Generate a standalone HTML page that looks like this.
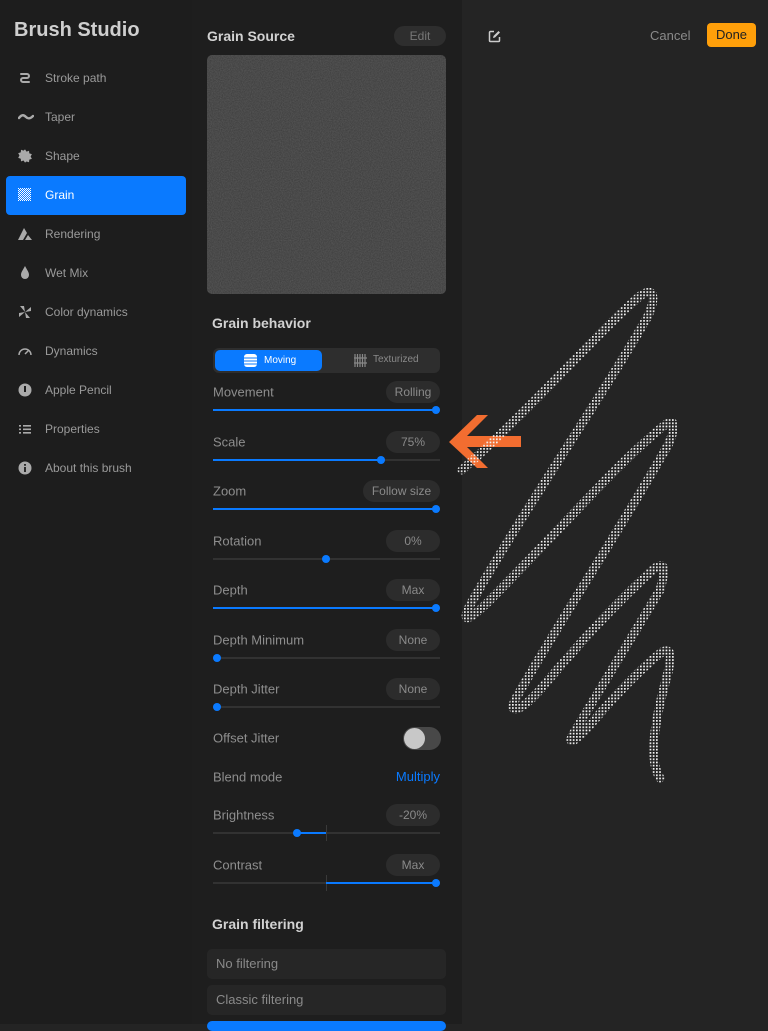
<!DOCTYPE html>
<html><head><meta charset="utf-8"><style>
*{margin:0;padding:0;box-sizing:border-box}
body{width:768px;height:1024px;overflow:hidden;background:#242424;font-family:"Liberation Sans",sans-serif;position:relative}
.a{position:absolute}
#side{left:0;top:0;width:192px;height:1024px;background:#1d1d1d}
#mid{left:192px;top:0;width:270px;height:1024px;background:#1e1e1e}
.nav{position:absolute;left:6px;width:180px;height:39px;color:#9a9a9a;font-size:12px;line-height:39px;padding-left:39px;border-radius:4px}
.nav svg{position:absolute;left:12px;top:12px}
.lbl{position:absolute;left:213px;color:#8e8e8e;font-size:13px;transform:translateY(-50%)}
.pill{position:absolute;right:328px;height:22px;line-height:22px;border-radius:11px;background:#2c2c2c;color:#8a8a8a;font-size:12px;text-align:center;transform:translateY(-50%)}
.trk{position:absolute;left:213px;width:227px;height:2px;background:#323232}
.fill{position:absolute;height:2px;background:#0a7aff}
.dot{position:absolute;width:8px;height:8px;border-radius:4px;background:#0a7aff}
.h{position:absolute;color:#d2d2d2;font-weight:bold;font-size:14px}
</style></head><body>
<div id="side" class="a"></div>
<div id="mid" class="a"></div>
<div class="a" style="left:14px;top:19px;color:#cfcfcf;font-size:20px;font-weight:bold">Brush Studio</div>

<div class="nav" style="top:59px"><svg width="14" height="14" viewBox="0 0 14 14"><path d="M3 3h6a2 2 0 0 1 0 4H5a2 2 0 0 0 0 4h6" stroke="#aaa" stroke-width="2" fill="none" stroke-linecap="round"/></svg>Stroke path</div>
<div class="nav" style="top:98px"><svg width="16" height="14" viewBox="0 0 16 14"><path d="M1 8c3-4 5-3 7-1s4 2 7-1" stroke="#aaa" stroke-width="2.4" fill="none" stroke-linecap="round"/></svg>Taper</div>
<div class="nav" style="top:137px"><svg width="14" height="14" viewBox="0 0 14 14"><path d="M7 0l1.6 2.3 2.6-.9.3 2.8 2.7.8-1.3 2.5 1.3 2.5-2.7.8-.3 2.8-2.6-.9L7 14l-1.6-2.3-2.6.9-.3-2.8L-.2 9l1.3-2.5L-.2 4l2.7-.8.3-2.8 2.6.9z" fill="#aaa" transform="scale(.95) translate(.4 .4)"/></svg>Shape</div>
<div class="nav" style="top:176px;background:#0a7aff;color:#fff"><svg width="13" height="13" viewBox="0 0 13 13"><defs><pattern id="ck" width="2" height="2" patternUnits="userSpaceOnUse"><rect width="1" height="1" fill="#fff"/><rect x="1" y="1" width="1" height="1" fill="#fff"/></pattern></defs><rect width="13" height="13" fill="url(#ck)"/></svg>Grain</div>
<div class="nav" style="top:215px"><svg width="15" height="14" viewBox="0 0 15 14"><path d="M0 13L6 1l3 5-4 7zM7 13l3-5 4 5z" fill="#aaa"/></svg>Rendering</div>
<div class="nav" style="top:254px"><svg width="14" height="14" viewBox="0 0 14 14"><path d="M7 0C5 4 3 6 3 9a4 4 0 0 0 8 0c0-3-2-5-4-9z" fill="#aaa"/></svg>Wet Mix</div>
<div class="nav" style="top:293px"><svg width="14" height="14" viewBox="0 0 14 14"><path d="M7 7L2 1h4zM7 7l6-5v4zM7 7l5 6H8zM7 7l-6 5V8z" fill="#aaa"/></svg>Color dynamics</div>
<div class="nav" style="top:332px"><svg width="14" height="14" viewBox="0 0 14 14"><path d="M1 11a6 6 0 0 1 12 0" stroke="#aaa" stroke-width="1.5" fill="none"/><path d="M7 10l4-4" stroke="#aaa" stroke-width="1.5"/></svg>Dynamics</div>
<div class="nav" style="top:371px"><svg width="14" height="14" viewBox="0 0 14 14"><circle cx="7" cy="7" r="6.5" fill="#aaa"/><path d="M6 3h2v6H6z" fill="#1d1d1d"/></svg>Apple Pencil</div>
<div class="nav" style="top:410px"><svg width="14" height="14" viewBox="0 0 14 14"><path d="M1 3h2v1.6H1zM5 3h8v1.6H5zM1 6.5h2v1.6H1zM5 6.5h8v1.6H5zM1 10h2v1.6H1zM5 10h8v1.6H5z" fill="#aaa"/></svg>Properties</div>
<div class="nav" style="top:449px"><svg width="14" height="14" viewBox="0 0 14 14"><circle cx="7" cy="7" r="6.5" fill="#aaa"/><path d="M6.1 6h1.8v5H6.1zM6.1 3h1.8v1.8H6.1z" fill="#1d1d1d"/></svg>About this brush</div>

<div class="h" style="left:207px;top:28px">Grain Source</div>
<div class="a" style="left:394px;top:26px;width:52px;height:20px;border-radius:10px;background:#2e2e2e;color:#777;font-size:12px;line-height:20px;text-align:center">Edit</div>
<svg class="a" style="left:207px;top:55px" width="239" height="239"><defs><filter id="n"><feTurbulence type="fractalNoise" baseFrequency="0.9" numOctaves="2" seed="3"/><feColorMatrix values="0 0 0 0 .4 0 0 0 0 .4 0 0 0 0 .4 0 0 0 .3 0"/></filter><clipPath id="cp"><rect width="239" height="239" rx="5"/></clipPath></defs><g clip-path="url(#cp)"><rect width="239" height="239" fill="#393939"/><rect width="239" height="239" filter="url(#n)"/></g></svg>

<div class="h" style="left:212px;top:315px">Grain behavior</div>
<div class="a" style="left:213px;top:348px;width:227px;height:25px;border-radius:6px;background:#2e2e2e"></div>
<div class="a" style="left:215px;top:350px;width:107px;height:21px;border-radius:5px;background:#0a7aff;color:#fff;font-size:10px;line-height:21px;padding-left:49px">Moving</div>
<svg class="a" style="left:244px;top:354px" width="13" height="13"><rect width="13" height="13" rx="3" fill="#fff"/><path d="M0 4h13M0 7h13M0 10h13" stroke="#0a7aff" stroke-width="1"/></svg>
<svg class="a" style="left:354px;top:354px" width="13" height="13"><path d="M1 0v13M3.5 0v13M6 0v13M8.5 0v13M11 0v13M0 4h13M0 9h13" stroke="#888" stroke-width="1.2"/></svg>
<div class="a" style="left:373px;top:354px;color:#8a8a8a;font-size:10px;line-height:12px">Texturized</div>

<div class="lbl" style="top:392px">Movement</div><div class="pill" style="top:392px;width:54px">Rolling</div>
<div class="trk" style="top:409px"></div><div class="fill" style="left:213px;top:409px;width:223px"></div><div class="dot" style="left:432px;top:406px"></div>

<div class="lbl" style="top:442px">Scale</div><div class="pill" style="top:442px;width:54px">75%</div>
<div class="trk" style="top:459px"></div><div class="fill" style="left:213px;top:459px;width:168px"></div><div class="dot" style="left:377px;top:456px"></div>

<div class="lbl" style="top:491px">Zoom</div><div class="pill" style="top:491px;width:77px">Follow size</div>
<div class="trk" style="top:508px"></div><div class="fill" style="left:213px;top:508px;width:223px"></div><div class="dot" style="left:432px;top:505px"></div>

<div class="lbl" style="top:541px">Rotation</div><div class="pill" style="top:541px;width:54px">0%</div>
<div class="trk" style="top:558px"></div><div class="dot" style="left:322px;top:555px"></div>

<div class="lbl" style="top:590px">Depth</div><div class="pill" style="top:590px;width:54px">Max</div>
<div class="trk" style="top:607px"></div><div class="fill" style="left:213px;top:607px;width:223px"></div><div class="dot" style="left:432px;top:604px"></div>

<div class="lbl" style="top:640px">Depth Minimum</div><div class="pill" style="top:640px;width:54px">None</div>
<div class="trk" style="top:657px"></div><div class="dot" style="left:213px;top:654px"></div>

<div class="lbl" style="top:689px">Depth Jitter</div><div class="pill" style="top:689px;width:54px">None</div>
<div class="trk" style="top:706px"></div><div class="dot" style="left:213px;top:703px"></div>

<div class="lbl" style="top:738px">Offset Jitter</div>
<div class="a" style="left:403px;top:727px;width:38px;height:23px;border-radius:12px;background:#484848"></div>
<div class="a" style="left:404px;top:728px;width:21px;height:21px;border-radius:11px;background:#c8c8c8"></div>

<div class="lbl" style="top:777px">Blend mode</div>
<div class="a" style="right:328px;top:769px;color:#0a7aff;font-size:13px">Multiply</div>

<div class="lbl" style="top:815px">Brightness</div><div class="pill" style="top:815px;width:54px">-20%</div>
<div class="trk" style="top:832px"></div><div class="a" style="left:326px;top:825px;width:1px;height:16px;background:#3a3a3a"></div><div class="fill" style="left:297px;top:832px;width:29px"></div><div class="dot" style="left:293px;top:829px"></div>

<div class="lbl" style="top:865px">Contrast</div><div class="pill" style="top:865px;width:54px">Max</div>
<div class="trk" style="top:882px"></div><div class="a" style="left:326px;top:875px;width:1px;height:16px;background:#3a3a3a"></div><div class="fill" style="left:326px;top:882px;width:110px"></div><div class="dot" style="left:432px;top:879px"></div>

<div class="h" style="left:212px;top:916px">Grain filtering</div>
<div class="a" style="left:207px;top:949px;width:239px;height:30px;border-radius:5px;background:#262626;color:#8a8a8a;font-size:13px;line-height:30px;padding-left:9px">No filtering</div>
<div class="a" style="left:207px;top:985px;width:239px;height:30px;border-radius:5px;background:#262626;color:#8a8a8a;font-size:13px;line-height:30px;padding-left:9px">Classic filtering</div>
<div class="a" style="left:207px;top:1021px;width:239px;height:10px;border-radius:5px;background:#0a7aff"></div>

<svg class="a" style="left:488px;top:30px" width="13" height="13" viewBox="0 0 13 13"><path d="M6 1.5H2.5a1 1 0 0 0-1 1v8a1 1 0 0 0 1 1h8a1 1 0 0 0 1-1V7" stroke="#ccc" stroke-width="1.5" fill="none"/><path d="M5 8l.5-2L10.5 1l1.5 1.5-5 5z" fill="#ccc"/></svg>
<div class="a" style="left:650px;top:28px;color:#8a8a8a;font-size:13px">Cancel</div>
<div class="a" style="left:707px;top:23px;width:49px;height:24px;border-radius:4px;background:#ff9f0a;color:#222;font-size:13px;line-height:24px;text-align:center">Done</div>

<svg class="a" style="left:0;top:0" width="768" height="1024"><path d="M449 442 L477 415 H488 L467 436 H521 V447 H467 L488 468 H477 Z" fill="#f26d30"/></svg>

<svg class="a" style="left:0;top:0" width="768" height="1024"><defs><pattern id="dp" width="3.2" height="3.2" patternUnits="userSpaceOnUse"><rect width="1.7" height="1.7" fill="#f2f2f2"/></pattern></defs>
<path d="M462 470 C540 400 600 330 640 296 C656 285 655 300 648 316 C600 400 530 500 470 605 C460 625 470 620 490 600 C560 530 620 460 665 425 C678 416 674 432 668 445 C620 530 560 620 515 700 C508 715 520 712 540 690 C590 630 630 590 655 568 C668 560 664 575 660 590 C630 640 600 690 572 736 C568 745 575 742 590 725 C620 690 645 665 662 652 C675 646 670 665 666 680 C655 720 648 760 660 778" stroke="url(#dp)" stroke-width="9" fill="none" stroke-linecap="round"/></svg>
</body></html>
